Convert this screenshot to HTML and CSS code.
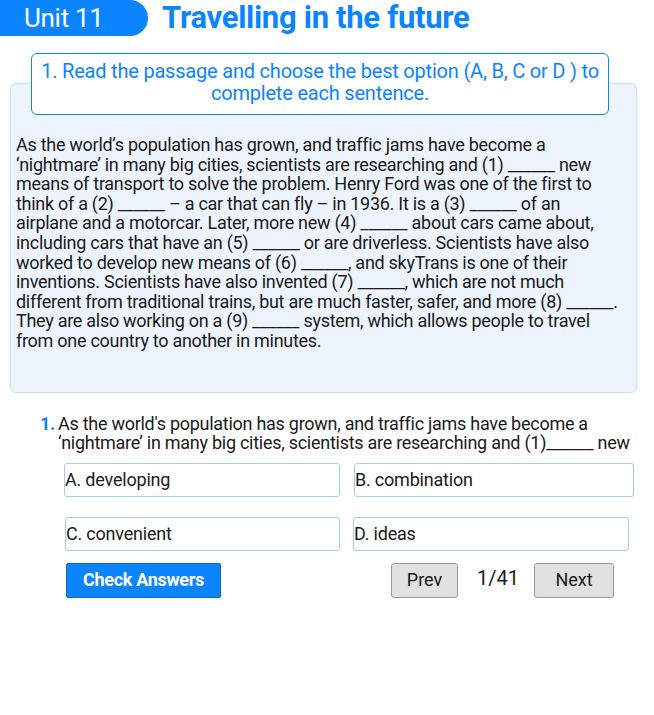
FILE: index.html
```html
<!DOCTYPE html>
<html>
<head>
<meta charset="utf-8">
<link rel="stylesheet" href="styles.css">
</head>
<body>
<div class="page">
  <header class="header">
    <div class="unit">Unit 11</div>
    <h1 class="title">Travelling in the future</h1>
  </header>
  <section class="task">
    <div class="instruction">1. Read the passage and choose the best option (A, B, C or D ) to complete each sentence.</div>
    <div class="passage">As the world’s population has grown, and traffic jams have become a ‘nightmare’ in many big cities, scientists are researching and (1) ______ new means of transport to solve the problem. Henry Ford was one of the first to think of a (2) ______ – a car that can fly – in 1936. It is a (3) ______ of an airplane and a motorcar. Later, more new (4) ______ about cars came about, including cars that have an (5) ______ or are driverless. Scientists have also worked to develop new means of (6) ______, and skyTrans is one of their inventions. Scientists have also invented (7) ______, which are not much different from traditional trains, but are much faster, safer, and more (8) ______. They are also working on a (9) ______ system, which allows people to travel from one country to another in minutes.</div>
  </section>
  <section class="question">
    <div class="q-text"><span class="q-num">1.</span><span class="q-body">As the world's population has grown, and traffic jams have become a ‘nightmare’ in many big cities, scientists are researching and (1)______ new</span></div>
    <div class="options">
      <div class="opt opt-a">A. developing</div>
      <div class="opt opt-b">B. combination</div>
      <div class="opt opt-c">C. convenient</div>
      <div class="opt opt-d">D. ideas</div>
    </div>
    <div class="controls">
      <button class="check">Check Answers</button>
      <div class="nav">
        <button class="navbtn prev">Prev</button>
        <span class="count">1/41</span>
        <button class="navbtn next">Next</button>
      </div>
    </div>
  </section>
</div>
</body>
</html>
```

FILE: styles.css
```css
* { box-sizing: border-box; }
html, body { margin: 0; padding: 0; background: #fff; }
body { font-family: Roboto, "Liberation Sans", sans-serif; color: #1a1a1a; }
.page { width: 654px; height: 715px; overflow: hidden; }

.header { display: flex; align-items: center; height: 36px; }
.unit {
  width: 148px; height: 36px; background: #0a84ff; color: #fff;
  border-radius: 0 18px 18px 0; font-size: 26px; line-height: 36px;
  padding-left: 24px; letter-spacing: -0.3px; flex: none;
}
.title {
  margin: 0 0 0 14px; font-size: 31px; font-weight: 700; color: #0a84ff;
  letter-spacing: -0.3px; line-height: 36px; white-space: nowrap;
}

.task { margin-top: 17px; padding: 0 17px 0 10px; }
.instruction {
  position: relative; z-index: 1;
  margin: 0 28px 0 21px; height: 62px;
  background: #fff; border: 1px solid #0a84ff; border-radius: 6px;
  color: #0a84ff; font-size: 20px; line-height: 22px; text-align: center;
  padding: 6px 4px 0; margin-bottom: -32px; letter-spacing: -0.2px;
}
.passage {
  background: #edf4fe; border: 1px solid #b6ecf1; border-radius: 6px;
  padding: 51px 13px 40px 5px; height: 310px;
  font-size: 18px; line-height: 19.6px; color: #1a1a1a; letter-spacing: -0.28px;
}

.question { padding: 22px 0 0 40px; }
.q-text { display: flex; font-size: 18px; line-height: 18.5px; letter-spacing: -0.27px; }
.q-num { color: #0a84ff; font-weight: 700; width: 18px; flex: none; }
.q-body { flex: 1; padding-right: 10px; }

.options {
  display: grid; grid-template-columns: 276px 280px; column-gap: 14px; row-gap: 20px;
  margin: 11px 0 0 24px;
}
.opt {
  height: 34px; border: 1px solid #9fcdf8; border-radius: 3px;
  font-size: 18px; line-height: 31px; letter-spacing: -0.2px; background: #fff;
}
.opt-c { margin-left: 1px; }
.opt-d { margin-left: -1px; width: 276px; }

.controls { display: flex; align-items: center; margin: 12px 0 0 26px; }
.check {
  width: 155px; height: 35px; background: #0a84ff; color: #fff;
  border: 1px solid #1565c0; border-radius: 2px;
  font-family: inherit; font-size: 18px; font-weight: 700; letter-spacing: -0.3px;
  padding-bottom: 3px;
}
.nav { display: flex; align-items: center; margin-left: 170px; }
.navbtn {
  height: 35px; background: #e1e1e1; border: 1px solid #999; border-radius: 3px;
  font-family: inherit; font-size: 18px; color: #1a1a1a; padding-bottom: 3px;
}
.prev { width: 67px; }
.next { width: 80px; }
.count { font-size: 20px; color: #1a1a1a; margin: 0 15px 0 19px; padding-bottom: 6px; }
```
